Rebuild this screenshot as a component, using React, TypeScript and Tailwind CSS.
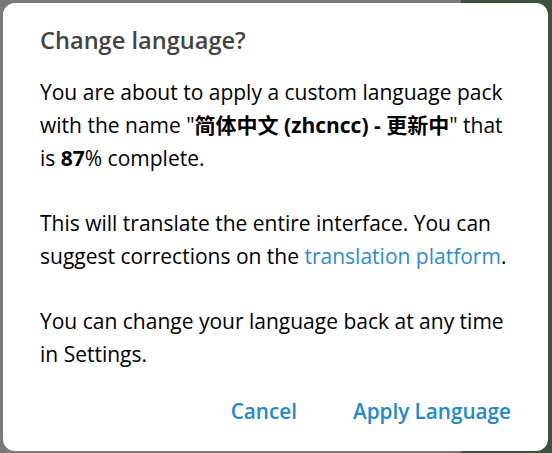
import React from "react";

/* ── Change language dialog ── */

export default function App() {
  return (
    <div
      className="w-[552px] h-[453px] overflow-hidden pt-[3px] pl-[3px] pr-[4px] pb-[2px] bg-[linear-gradient(to_right,#7a7a7a_0,#7a7a7a_83.5%,#3b523b_83.5%,#3b523b_100%)]"
      style={{ fontFamily: '"Open Sans", "Noto Sans CJK SC", sans-serif' }}
    >
      <div className="h-full rounded-[12px] bg-white pl-[37px] pr-[30px] pt-[21px] flex flex-col">
        <h1 className="text-[23.6px] leading-[32px] font-semibold text-[#444444]">
          Change language?
        </h1>

        <div className="mt-[20px] text-[21px] leading-[33px] text-black flex flex-col gap-[32px]">
          <p>
            You are about to apply a custom language pack with the name "
            <b className="font-bold">简体中文 (zhcncc) - 更新中</b>" that is{" "}
            <b className="font-bold">87</b>% complete.
          </p>
          <p>
            This will translate the entire interface. You can suggest
            corrections on the{" "}
            <span className="text-[#2a8dd4]">translation platform</span>.
          </p>
          <p>
            You can change your language back at any time in Settings.
          </p>
        </div>

        <div className="mt-[26px] flex justify-end gap-[56px] text-[20.7px] leading-[28px] font-semibold text-[#2089d0] pr-[7px]">
          <button type="button">Cancel</button>
          <button type="button">Apply Language</button>
        </div>
      </div>
    </div>
  );
}
